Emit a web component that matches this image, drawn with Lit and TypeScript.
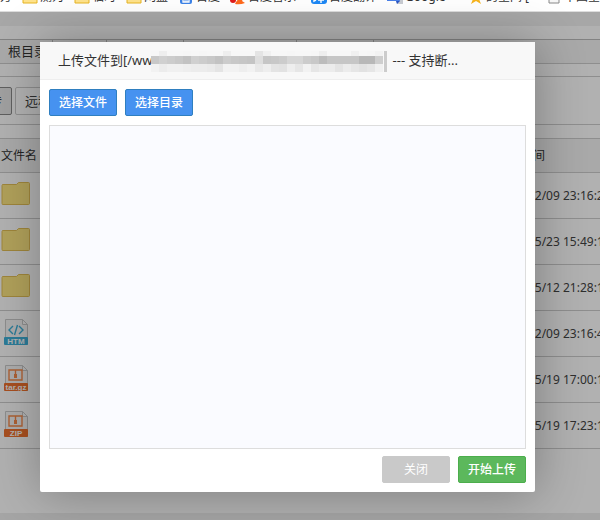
import { LitElement, html, css, svg } from "lit";
import { customElement } from "lit/decorators.js";

const folderMark = svg`<path d="M1 1h6l2 2h6v11H1z" fill="#ffe38c" stroke="#e6b422"/>`;
const marks: Record<string, unknown> = {
  none: "",
  folder: folderMark,
  baidu: svg`<rect x="2" y="1" width="12" height="14" rx="2" fill="#3b82e8"/><path d="M5 13v-3q3-4 6 0v3z" fill="none" stroke="#fff" stroke-width="1.3"/><path d="M7 10v3M9 10v3" stroke="#fff"/>`,
  music: svg`<circle cx="3" cy="11" r="3" fill="#e01b1b"/><path d="M5 15q3-7 8-5l-1 2 3 2q-5 2-10 1z" fill="#ff6a1c"/>`,
  fanyi: svg`<rect y="-1" width="16" height="16" rx="3" fill="#1e88f5"/><path d="M3 6v6l2-1M7 8h6M7 11h6M10 6v8" stroke="#fff" stroke-width="1.4" fill="none"/>`,
  google: svg`<path d="M7 4h9v11h-6z" fill="#c9ccd2"/><path d="M0 0h10l3 12H0z" fill="#4a80e8"/><path d="M9 12h4l-3 3z" fill="#2a56c6"/>`,
  star: svg`<path d="M8 0l2 6 5 0-4 4 2 5-5-3-5 3 2-5-4-4h5z" fill="#f7b51e"/>`,
  page: svg`<path d="M3 0h10v14H3z" fill="#f6f6f6" stroke="#888"/>`,
};

const bookmarks = [
  { mark: "none", text: "方" },
  { mark: "folder", text: "测为" },
  { mark: "folder", text: "临时" },
  { mark: "folder", text: "网盘" },
  { mark: "baidu", text: "百度" },
  { mark: "music", text: "百度音乐" },
  { mark: "fanyi", text: "百度翻译" },
  { mark: "google", text: "Google" },
  { mark: "star", text: "的空间 [" },
  { mark: "page", text: "中国空间" },
];

const archive = svg`<path d="M9 9h13v10H9zM15.500 9v7" fill="none" stroke="#f58a4b" stroke-width="1.400"/><path d="M14 13h3v4h-3z" fill="#f58a4b"/>`;
const rows = [
  { kind: "folder", time: "2018/02/09 23:16:21" },
  { kind: "folder", time: "2018/05/23 15:49:12" },
  { kind: "folder", time: "2018/05/12 21:28:10" },
  { kind: "HTM", time: "2018/02/09 23:16:42" },
  { kind: "tar.gz", time: "2018/05/19 17:00:15" },
  { kind: "ZIP", time: "2018/05/19 17:23:10" },
];

function fileIcon(kind: string) {
  if (kind === "folder") {
    return html`<svg class="icon" width="32" height="32" viewBox="0 0 32 32" aria-hidden="true">
      <path d="M2.500 7.500h14l2-2h10q1 0 1 1v20q0 1-1 1h-26q-.5 0-.5-1v-18z" fill="#fce681" stroke="#e3bf55"/>
    </svg>`;
  }
  const tint = kind === "HTM" ? "#3fb0d8" : "#f0722e";
  return html`<svg class="icon" width="32" height="32" viewBox="0 0 32 32" aria-hidden="true">
    <path d="M5.500 4.500h17l5 5v20h-22zM22.500 4.500v5h5" fill="#f7f7f7" stroke="#c9c9c9"/>
    ${kind === "HTM"
      ? svg`<path d="M13 11l-4 4 4 4M19 11l4 4-4 4M17.500 10l-3 10" fill="none" stroke="#3fb0d8" stroke-width="1.400"/>`
      : archive}
    <rect x="4" y="22" width="24" height="8" rx="1" fill=${tint}/>
    <text x="16" y="29" text-anchor="middle" font-family="Liberation Sans, sans-serif" font-size="8" font-weight="bold" fill="#fff">${kind}</text>
  </svg>`;
}

const mosaicRows = [
  { y: 0, h: 5, tones: [247,238,247,247,246,247,246,247,247,238,247,247,247,228,240,247,247,246,247,247,246,238,247,247,247,240,247,246,242] },
  { y: 5, h: 8, tones: [200,208,204,200,194,208,204,200,194,204,200,198,196,222,198,200,204,214,214,204,200,188,198,198,198,198,184,184,206] },
  { y: 13, h: 8, tones: [242,236,240,240,238,236,236,234,228,242,242,238,242,232,238,228,226,238,230,242,230,236,236,228,236,230,226,230,240] },
];

@customElement("app-root")
export class AppRoot extends LitElement {
  static styles = css`
    :host {
      display: block;
      min-height: 100vh;
      overflow: hidden;
      background: #fff;
      color: #333;
      font: 13px/20px "Noto Sans", "Noto Sans CJK SC", sans-serif;
    }
    * { box-sizing: border-box; }
    button { font: inherit; cursor: pointer; }
    .bookmarks {
      display: grid;
      grid-template-columns: 22px 52px 52px 52px 52px 81px 76px 81px 78px 1fr;
      align-content: end;
      height: 12px;
      padding-bottom: 6px;
      border-bottom: 1px solid #ddd;
      background: #fff;
      overflow: hidden;
    }
    .bookmark {
      display: flex;
      gap: 2px;
      align-items: center;
      color: #333;
      font-size: 12px;
      line-height: 16px;
      white-space: nowrap;
      text-decoration: none;
    }
    .mark { flex: none; overflow: visible; }
    .page-shell { position: relative; min-height: calc(100vh - 12px); overflow: hidden; background: #ededed; }
    .strip { height: 14px; background: #f0f0f0; }
    .body { padding-top: 13px; background: #fefefe; }
    .crumbs {
      display: grid;
      grid-template-columns: 53px 54px 77px 113px 77px;
      height: 25px;
      border-top: 1px solid #bbb;
      border-bottom: 1px solid #ccc;
      background: #f3f3f3;
    }
    .crumb { padding: 0 8px; border-right: 1px solid #bbb; color: #333; line-height: 22px; text-decoration: none; white-space: nowrap; }
    .toolbar {
      display: flex;
      gap: 3px;
      align-items: center;
      height: 49px;
      margin-top: 12px;
      border-top: 1px solid #ccc;
      border-bottom: 1px solid #ccc;
    }
    .tool { height: 28px; padding: 0 9px; border: 1px solid #ccc; border-radius: 2px; background: #fff; color: #444; white-space: nowrap; }
    .tool-on { width: 46px; margin-left: -34px; border-color: #888; background: #e6e6e6; }
    .files { width: 100%; min-width: 660px; margin-top: 13px; border-collapse: collapse; table-layout: fixed; border-top: 1px solid #ccc; font-size: 12px; }
    .name { width: 496px; }
    th { height: 34px; padding: 0 1px; border-bottom: 1px solid #ccc; background: #f3f3f3; font-weight: normal; text-align: left; }
    td { height: 46px; padding: 0; border-bottom: 1px solid #ccc; color: #444; }
    .icon { display: block; margin-bottom: 6px; }
    .rest { height: 64px; }
    .shade { position: absolute; inset: 0; background: rgba(0, 0, 0, 0.3); }
    .dialog {
      position: absolute;
      top: 42px;
      left: 40px;
      right: 65px;
      border-radius: 2px;
      background: #fff;
      box-shadow: 1px 1px 50px rgba(0, 0, 0, 0.3);
    }
    .title {
      display: flex;
      align-items: center;
      height: 38px;
      margin: 0;
      padding: 0 18px 2px;
      border-bottom: 1px solid #eee;
      background: #f8f8f8;
      font-size: 13px;
      font-weight: normal;
      white-space: nowrap;
    }
    .mosaic { flex: none; margin: 3px 6px 0 -2px; }
    .content { padding: 9px; }
    .actions, .footer { display: flex; gap: 8px; }
    .footer { justify-content: flex-end; }
    .button {
      width: 68px;
      height: 27px;
      padding: 0;
      border: 1px solid #2f7fc0;
      border-radius: 2px;
      background: #4692f0;
      color: #fff;
      font-size: 12px;
      font-weight: 500;
      line-height: 20px;
    }
    .close { border-color: #c9c9c9; background: #c9c9c9; font-weight: normal; }
    .start { border-color: #4cae4c; background: #5cb85c; }
    .drop { height: 324px; margin: 9px 0 7px; border: 1px solid #ddd; background: #fafbff; }
  `;

  render() {
    return html`
      <nav class="bookmarks">
        ${bookmarks.map((b) => html`<a class="bookmark" href="#">
          ${b.mark === "none" ? "" : html`<svg class="mark" width="16" height="16" viewBox="0 0 16 16" aria-hidden="true">${marks[b.mark]}</svg>`}
          <span>${b.text}</span></a>`)}
      </nav>
      <div class="page-shell">
        <div class="strip"></div>
        <main class="body">
          <nav class="crumbs">
            <a class="crumb" href="#">根目录</a>
            <span class="crumb"></span>
            <span class="crumb"></span>
            <span class="crumb"></span>
            <span class="crumb"></span>
          </nav>
          <div class="toolbar">
            <button class="tool tool-on">上传</button>
            <button class="tool">远程下载</button>
          </div>
          <table class="files">
            <thead><tr><th class="name">文件名</th><th>修改时间</th></tr></thead>
            <tbody>
              ${rows.map((r) => html`<tr><td>${fileIcon(r.kind)}</td><td>${r.time}</td></tr>`)}
            </tbody>
          </table>
          <div class="rest"></div>
        </main>
        <div class="shade"></div>
      </div>
      <section class="dialog" role="dialog" aria-labelledby="title">
        <h2 class="title" id="title">
          <span>上传文件到[/ww</span>
          <svg class="mosaic" width="236" height="21" viewBox="0 0 236 21" shape-rendering="crispEdges" aria-hidden="true">
            ${mosaicRows.map((r) => r.tones.map((t, i) => svg`<rect x=${i * 8} y=${r.y} width="8" height=${r.h} fill="rgb(${t},${t},${t})"/>`))}
            <rect x="233" y="0" width="3" height="21" fill="#ccc"/>
          </svg>
          <span>--- 支持断...</span>
        </h2>
        <div class="content">
          <div class="actions">
            <button class="button">选择文件</button>
            <button class="button">选择目录</button>
          </div>
          <div class="drop"></div>
          <div class="footer">
            <button class="button close">关闭</button>
            <button class="button start">开始上传</button>
          </div>
        </div>
      </section>
    `;
  }
}
